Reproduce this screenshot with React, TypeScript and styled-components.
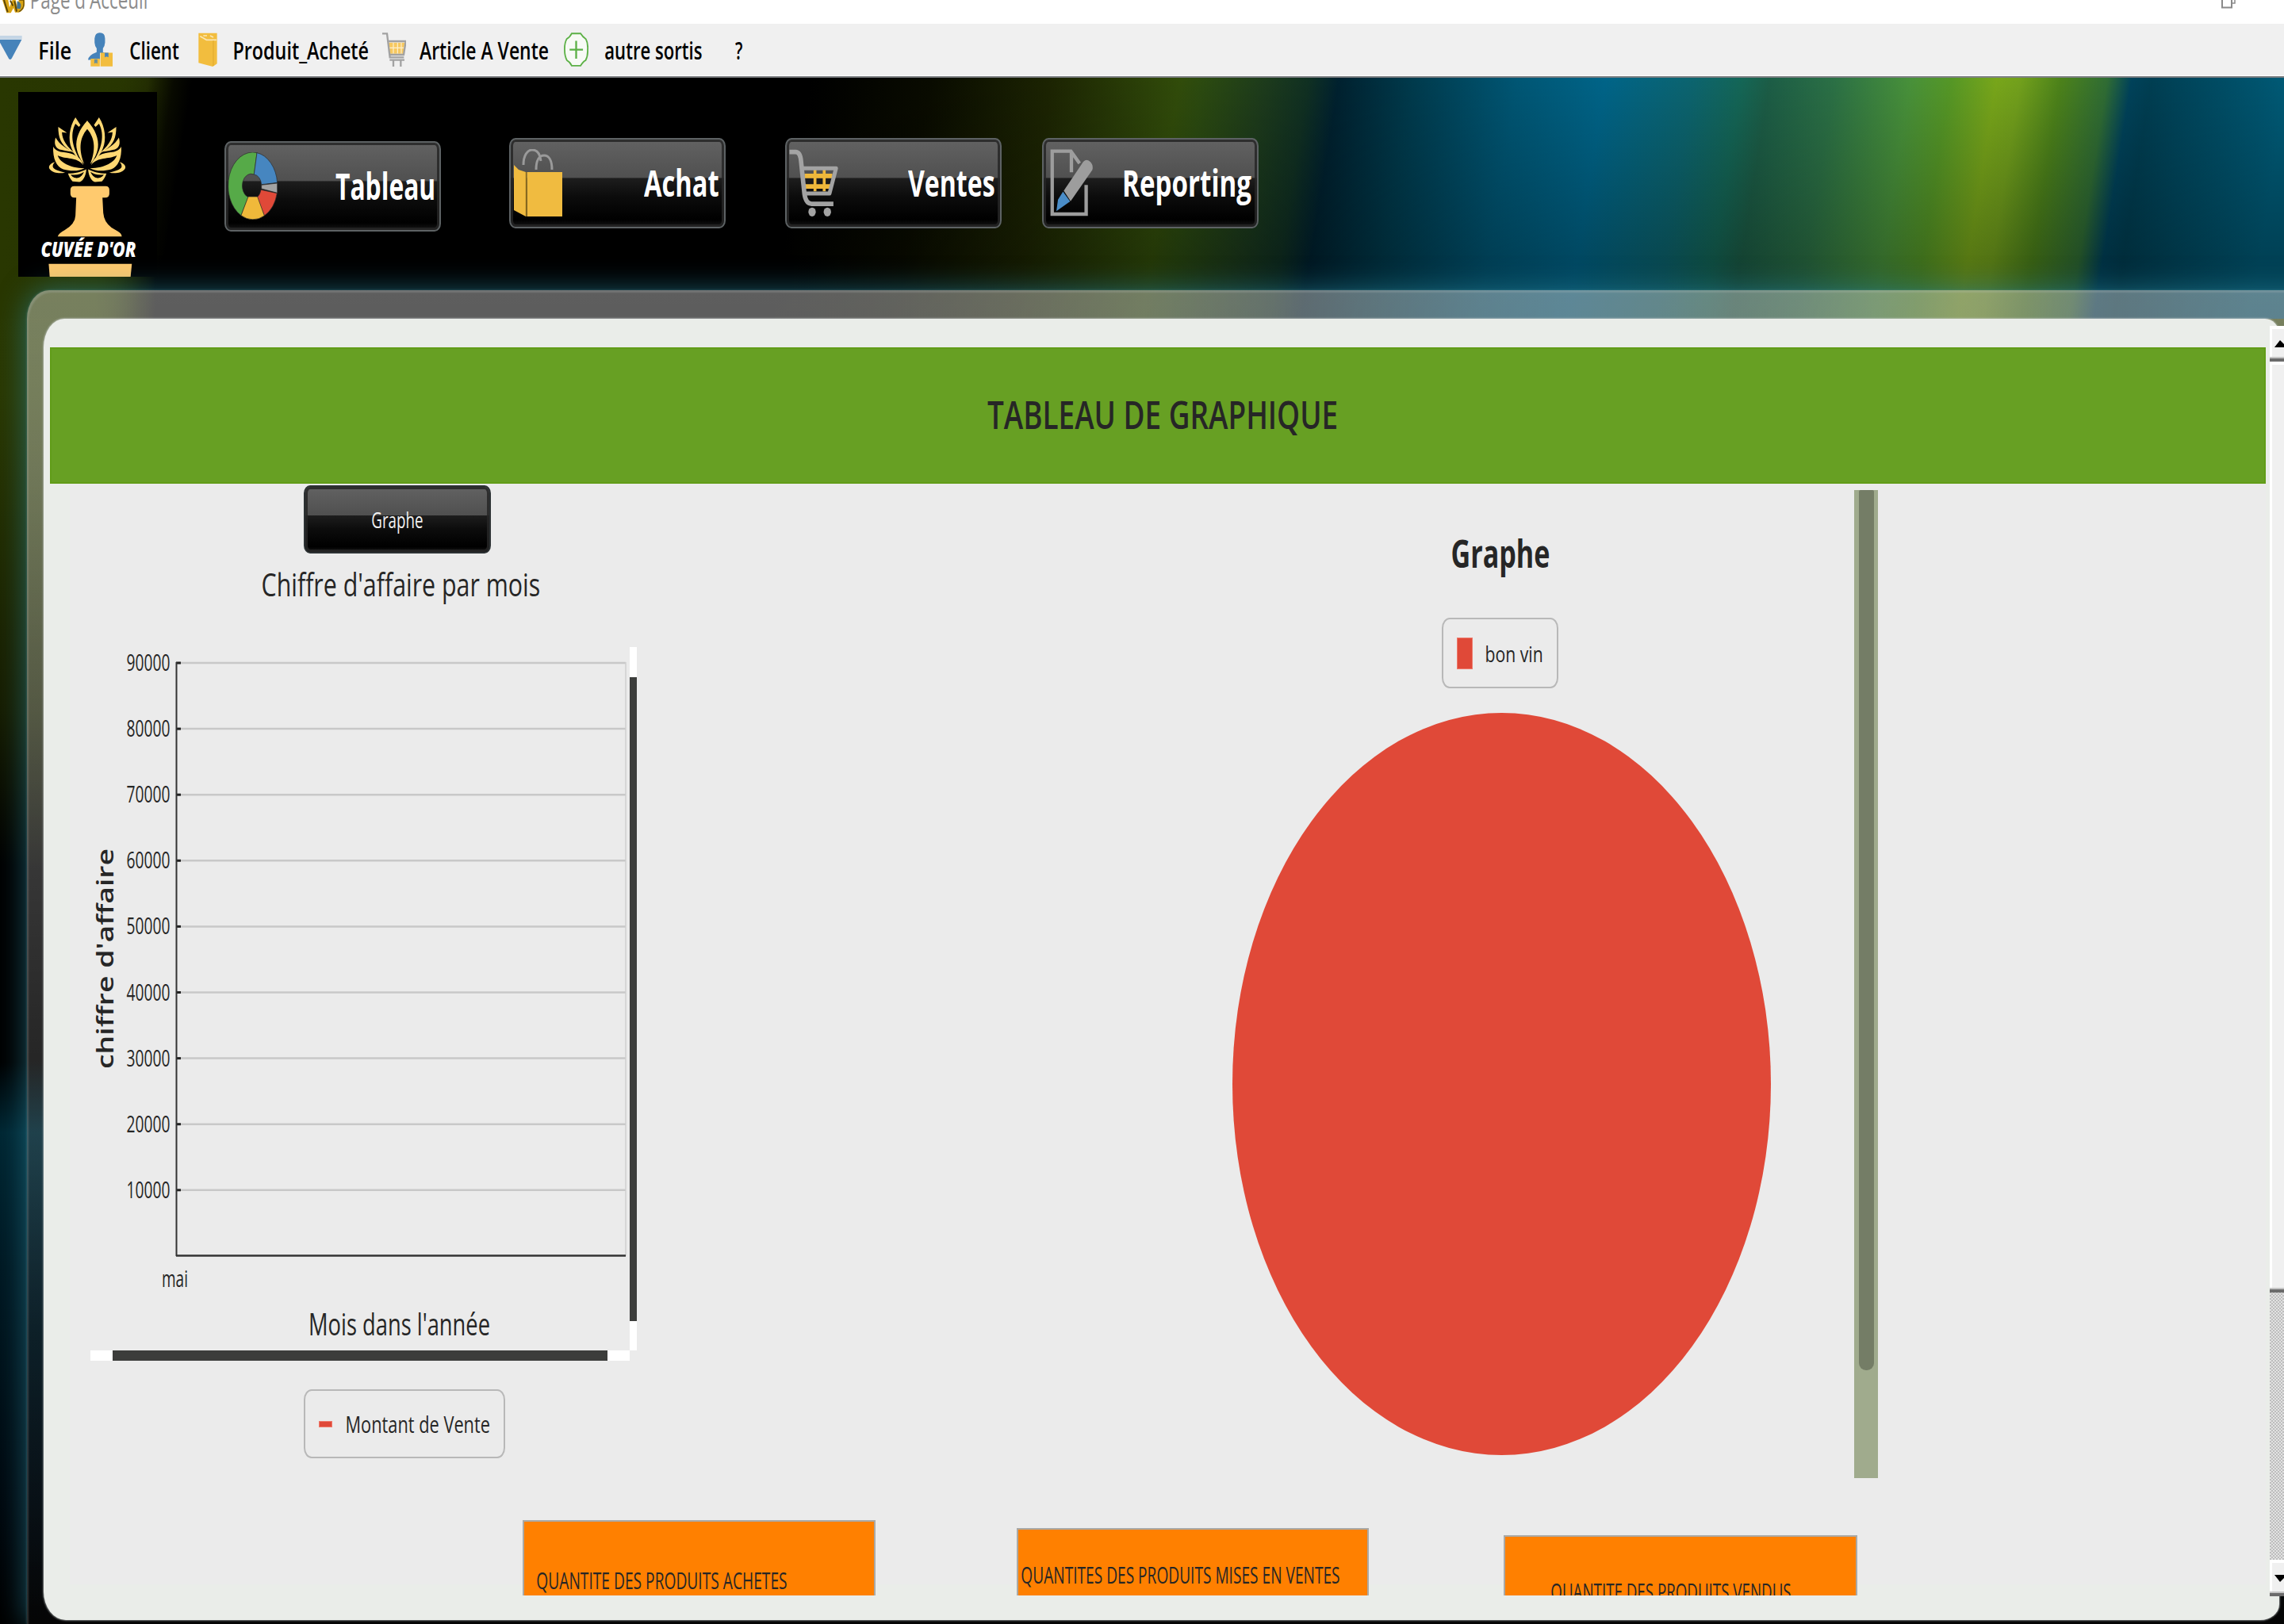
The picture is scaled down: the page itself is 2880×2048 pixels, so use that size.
import React, { useLayoutEffect, useRef, useState } from "react";
import styled, { createGlobalStyle } from "styled-components";

const FONT = '"Open Sans", "Noto Sans", sans-serif';

const GlobalStyle = createGlobalStyle`
  *, *::before, *::after { box-sizing: border-box; }
  html, body { margin: 0; padding: 0; background: #000; }
  body { font-family: ${FONT}; overflow: hidden; }
  svg { display: block; flex: none; }
`;

/* ---------- condensed text ---------- */

const LabelBox = styled.span<{ $w: number; $size: number }>`
  display: block;
  flex: none;
  width: ${(p) => p.$w}px;
  height: ${(p) => p.$size}px;
  line-height: ${(p) => p.$size}px;
  font-size: ${(p) => p.$size}px;
`;

const LabelInk = styled.span<{ $weight: number; $color: string }>`
  display: inline-block;
  white-space: nowrap;
  transform-origin: 0 50%;
  font-weight: ${(p) => p.$weight};
  color: ${(p) => p.$color};
`;

type LabelProps = {
  children: string;
  width: number;
  size: number;
  weight?: number;
  color?: string;
};

/** Text condensed horizontally so that its ink spans exactly `width` pixels. */
function Label({ children, width, size, weight = 400, color = "#262626" }: LabelProps) {
  const ref = useRef<HTMLSpanElement>(null);
  const [transform, setTransform] = useState("none");
  useLayoutEffect(() => {
    const ctx = document.createElement("canvas").getContext("2d");
    if (!ctx) return;
    ctx.font = `${weight} ${size}px ${FONT}`;
    const m = ctx.measureText(children);
    const ink = m.actualBoundingBoxLeft + m.actualBoundingBoxRight;
    const k = width / ink;
    setTransform(`translateX(${m.actualBoundingBoxLeft * k}px) scaleX(${k})`);
  }, [children, width, size, weight]);
  return (
    <LabelBox $w={width} $size={size}>
      <LabelInk ref={ref} $weight={weight} $color={color} style={{ transform }}>
        {children}
      </LabelInk>
    </LabelBox>
  );
}

/* ---------- window chrome ---------- */

const Window = styled.div`
  width: 2880px;
  height: 2048px;
  overflow: hidden;
  display: flex;
  flex-direction: column;
`;

const TitleBar = styled.div`
  flex: none;
  height: 30px;
  background: #fff;
  overflow: hidden;
  display: flex;
  align-items: flex-start;
  justify-content: space-between;
  padding: 0 61px 0 3px;
`;

const TitleGroup = styled.div`
  display: flex;
  gap: 9px;
  align-items: flex-start;
`;

const TitleText = styled.div`
  margin-top: -16px;
`;

const MenuBar = styled.div`
  flex: none;
  height: 68px;
  padding-bottom: 3px;
  background: linear-gradient(#f0f0f0 0 65px, #fff 65px 66px, #7e8184 66px);
  display: flex;
  align-items: center;
`;

const MenuItem = styled.div<{ $lead: number; $gap: number }>`
  display: flex;
  align-items: center;
  flex: none;
  margin: -1px 0 0 ${(p) => p.$lead}px;
  gap: ${(p) => p.$gap}px;
`;

const MenuText = styled.div`
  padding-top: 3px;
`;

const Desktop = styled.div`
  flex: 1;
  display: flex;
  flex-direction: column;
  background-image: linear-gradient(90deg, #293701 0px, #283601 120px, rgba(36, 48, 1, 0) 195px),
    linear-gradient(rgba(0, 0, 0, 0) 0%, rgba(0, 0, 0, 0.34) 92%),
    linear-gradient(
      99deg,
      #2a3a02 0px,
      #283601 150px,
      #222c02 185px,
      #080a00 217px,
      #000 240px,
      #000 1010px,
      #090b00 1160px,
      #1c2402 1310px,
      #314c0a 1470px,
      #2b4a10 1500px,
      #1c3a1c 1580px,
      #103022 1630px,
      #00212f 1668px,
      #003a4c 1760px,
      #005674 1890px,
      #006488 2000px,
      #0c646e 2110px,
      #146656 2170px,
      #1c5d46 2205px,
      #2b7045 2285px,
      #48913a 2380px,
      #559726 2430px,
      #78a61a 2487px,
      #72a01c 2517px,
      #4c821a 2567px,
      #2f6c34 2625px,
      #00425a 2655px,
      #003e52 2680px,
      #005a76 2850px
    ),
    linear-gradient(
      #283601 0px,
      #2a3802 400px,
      #161c00 800px,
      #000 1000px,
      #000 1240px,
      #002632 1330px,
      #001822 1500px,
      #00080e 1800px,
      #000 1950px
    );
  background-size: 100% 304px, 100% 304px, 100% 304px, 100% 100%;
  background-repeat: no-repeat;
`;

const ToolRow = styled.div`
  flex: none;
  height: 268px;
  display: flex;
  align-items: flex-start;
  padding: 18px 0 0 23px;
`;

const GlossButton = styled.div<{ $w: number; $h: number; $left: number; $top: number; $rim: string }>`
  flex: none;
  width: ${(p) => p.$w}px;
  height: ${(p) => p.$h}px;
  margin: ${(p) => p.$top}px 0 0 ${(p) => p.$left}px;
  border: 2px solid ${(p) => p.$rim};
  border-radius: 8px / 10px;
  background: linear-gradient(
    #626262 0%,
    #505050 43.5%,
    #1d1d1d 44.5%,
    #0c0c0c 65%,
    #000 92%,
    #161616 100%
  );
  box-shadow: inset 0 0 0 3px rgba(38, 38, 38, 0.85);
`;

const ToolFace = styled.div`
  height: 100%;
  display: flex;
  align-items: flex-start;
  justify-content: space-between;
  padding: 12px 7px 0 3px;
`;

const ToolCaption = styled.div`
  margin-top: 19px;
`;

const CenterFace = styled.div`
  height: 100%;
  display: flex;
  align-items: center;
  justify-content: center;
`;

/* ---------- panel ---------- */

const Frame = styled.div`
  flex: 1;
  margin: 0 -60px 0 34px;
  padding: 36px 0 0 21px;
  border-radius: 28px 0 0 0 / 36px 0 0 0;
  background: linear-gradient(
    rgba(255, 255, 255, 0.37) 0%,
    rgba(255, 255, 255, 0.34) 14%,
    rgba(255, 255, 255, 0.22) 42%,
    rgba(255, 255, 255, 0.13) 62%,
    rgba(255, 255, 255, 0.05) 78%,
    rgba(255, 255, 255, 0.02) 100%
  );
  box-shadow: 0 0 36px rgba(42, 140, 165, 0.6), 0 0 3px rgba(120, 165, 170, 0.5),
    inset 2px 3px 2px rgba(190, 200, 200, 0.22);
`;

const Panel = styled.div`
  width: 2819px;
  height: 1641px;
  display: flex;
  align-items: flex-start;
  background: #eaede9;
  border-radius: 26px 18px 24px 28px / 36px 20px 20px 36px;
  box-shadow: 0 0 2px 1px rgba(200, 205, 205, 0.55);
`;

const Content = styled.div`
  flex: none;
  width: 2794px;
  height: 1574px;
  margin: 36px 0 0 8px;
  overflow: hidden;
  display: flex;
  flex-direction: column;
  background: linear-gradient(#ebebeb, #ebebeb) 25px 0 / 100% 1560px no-repeat;
`;

const Banner = styled.div`
  flex: none;
  height: 172px;
  background: #67a023;
  box-shadow: inset 0 0 0 2px #619c18;
  display: flex;
  align-items: center;
  justify-content: center;
  padding: 0 0 2px 10px;
`;

const Body = styled.div`
  flex: none;
  height: 1307px;
  display: flex;
  align-items: flex-start;
`;

const SalesColumn = styled.div`
  width: 740px;
  display: flex;
  flex-direction: column;
`;

const SalesTitle = styled.div`
  margin: 18px 0 0 268px;
`;

const ChartViewport = styled.div`
  margin: 59px 0 0 51px;
  display: grid;
  grid-template-columns: 680px 9px;
  grid-template-rows: 887px 13px;
`;

const VBar = styled.div`
  background: linear-gradient(#fff 0 38px, #3c3d3b 38px 850px, #fff 850px);
`;

const HBar = styled.div`
  background: linear-gradient(90deg, #fff 0 28px, #3c3d3b 28px 652px, #fff 652px);
`;

const Legend = styled.div<{ $w: number; $h: number; $top: number; $left: number; $gap: number }>`
  flex: none;
  width: ${(p) => p.$w}px;
  height: ${(p) => p.$h}px;
  margin: ${(p) => p.$top}px 0 0 ${(p) => p.$left}px;
  padding-left: 17px;
  display: flex;
  align-items: center;
  gap: ${(p) => p.$gap}px;
  border: 2px solid #b8b8b8;
  border-radius: 10px / 13px;
`;

const Swatch = styled.div<{ $w: number; $h: number }>`
  width: ${(p) => p.$w}px;
  height: ${(p) => p.$h}px;
  background: #e04938;
  border: 1px solid #ee7a6c;
`;

const PieColumn = styled.div`
  width: 679px;
  margin: 63px 0 0 751px;
  display: flex;
  flex-direction: column;
  align-items: center;
`;

const PieHeading = styled.div`
  margin-right: 4px;
  display: flex;
  flex-direction: column;
  align-items: center;
`;

const PieBox = styled.div`
  margin-top: 31px;
`;

const PieScroll = styled.div`
  width: 30px;
  height: 1246px;
  margin: 8px 0 0 105px;
  padding: 0 5px 0 6px;
  background: #a0ab8d;
`;

const PieThumb = styled.div`
  height: 1110px;
  background: #747d66;
  border-radius: 2px 2px 9px 9px;
`;

const Cards = styled.div`
  flex: 1;
  display: flex;
  align-items: flex-start;
  padding-left: 596px;
`;

const Card = styled.div<{ $w: number; $lead: number; $top: number; $px: number; $py: number }>`
  flex: none;
  width: ${(p) => p.$w}px;
  height: 180px;
  margin: ${(p) => p.$top}px 0 0 ${(p) => p.$lead}px;
  padding: ${(p) => p.$py}px 0 0 ${(p) => p.$px}px;
  background: #ff8000;
  border: 2px solid #aaa9a6;
`;

/* ---------- classic scroll bar ---------- */

const ScrollBar = styled.div`
  flex: none;
  width: 18px;
  height: 1602px;
  margin: 9px 0 0 5px;
  display: flex;
  flex-direction: column;
  overflow: hidden;
  background: repeating-conic-gradient(#bdbdbd 0 25%, #e2e2e2 0 50%) 0 0 / 4px 4px;
`;

const Raised = styled.div<{ $h: number }>`
  flex: none;
  height: ${(p) => p.$h}px;
  padding-left: 6px;
  display: flex;
  align-items: center;
  background: linear-gradient(90deg, #fff 0 3px, #f0f0f0 3px);
  border-top: 4px solid #fff;
  border-bottom: 4px solid #6b6b6b;
  box-shadow: inset 0 -2px 0 #c4c4c4;
`;

const Track = styled.div`
  flex: 1;
`;

/* ---------- icons ---------- */

const AppIcon = () => (
  <svg width="28" height="17" viewBox="0 0 84 51">
    <path d="M0 0H22L27 28L38 0H50L56 26L62 0H84Q88 40 62 47H48L42 30L32 49H16Z" fill="#d9a414" />
    <path d="M6 0L20 46M46 4L54 44M30 2L40 22" stroke="#5b4508" strokeWidth="6" fill="none" />
    <path d="M56 4Q76 10 68 34L54 32Z" fill="#47748e" />
    <path d="M64 0H80Q86 34 62 44" stroke="#6b500a" strokeWidth="4" fill="none" />
  </svg>
);

const RestoreIcon = () => (
  <svg width="18" height="11" viewBox="0 0 18 11">
    <path d="M1 0V9.5H13V0" fill="none" stroke="#8a8a8a" strokeWidth="2" />
    <path d="M17 0V4H14" fill="none" stroke="#8a8a8a" strokeWidth="1.5" />
  </svg>
);

const DownIcon = () => (
  <svg width="28" height="43" viewBox="0 0 84 129">
    <path d="M0 12H83V26H0Z" fill="#c4d5e5" />
    <path d="M-6 27H82L44 98Q38 106 33 98Z" fill="#4683ba" />
  </svg>
);

const ClientIcon = () => (
  <svg width="31" height="43" viewBox="333 120 94 129">
    <path
      d="M378 120Q398 120 398 142V158Q397 172 390 180V194Q412 200 422 214V224H333Q334 206 366 194V180Q359 172 358 158V142Q360 120 378 120Z"
      fill="#4683ba"
    />
    <path d="M381 197H427V249H381Z M343 219H378V249H343Z" fill="#f2bd3e" />
    <path d="M397 197H411V214L404 211L397 214Z" fill="#4683ba" />
    <path d="M357 222H369V238L363 235L357 238Z" fill="#6a8f9a" />
    <path d="M380 197V249" stroke="#f4e2b8" strokeWidth="3" />
  </svg>
);

const ProductIcon = () => (
  <svg width="24" height="43" viewBox="751 120 72 129">
    <path d="M752 122H822V238L806 249L752 235Z" fill="#f2bd3e" />
    <path d="M758 134L782 148H820M770 132H784M796 132L808 138" stroke="#fbe7b4" strokeWidth="5" fill="none" />
    <path d="M808 150V246" stroke="#dfa92c" strokeWidth="3" />
  </svg>
);

const SmallCartIcon = () => (
  <svg width="30" height="43" viewBox="66 120 90 129">
    <path d="M90 158H151L146 200H94Z" fill="#f6c860" />
    <path d="M92 178H150M108 158V200M124 158V200M138 158V200" stroke="#fdf0cf" strokeWidth="3.5" />
    <path
      d="M66 124H84L95 214H148M87 153H155L147 204H93"
      fill="none"
      stroke="#a2a2a2"
      strokeWidth="7"
    />
    <path d="M94 224H150M108 224V249M136 224V249" fill="none" stroke="#a2a2a2" strokeWidth="7" />
  </svg>
);

const PlusIcon = () => (
  <svg width="31" height="43" viewBox="752 120 94 129">
    <path
      d="M782 123H816Q824 136 836 144Q845 160 843 186Q844 210 835 226Q826 230 816 246H782Q776 232 764 226Q755 210 755 186Q754 160 763 144Q775 138 782 123Z"
      fill="#f7faf5"
      stroke="#5bb045"
      strokeWidth="5.5"
    />
    <path d="M774 185H825M799 151V219" stroke="#5bb045" strokeWidth="7" />
  </svg>
);

const DonutIcon = () => (
  <svg width="62" height="85" viewBox="867 278 186 255">
    <g stroke="#2b2b2b" strokeWidth="2">
      <path d="M975 280A93 127 0 0 0 915 517L942 448A31 42 0 0 1 964 362Z" fill="#56aa48" />
      <path d="M975 280A93 127 0 0 1 1052 393L992 400A31 42 0 0 0 964 362Z" fill="#4686c0" />
      <path d="M1052 395V432L992 416V402Z" fill="#a3a3a3" />
      <path d="M1051 433A93 127 0 0 1 1003 518L976 448A31 42 0 0 0 990 420Z" fill="#e04938" />
      <path d="M1003 518A93 127 0 0 1 915 517L942 446H977Z" fill="#f0b93a" />
    </g>
  </svg>
);

const BagIcon = () => (
  <svg width="62" height="85" viewBox="0 0 62 85">
    <path d="M13 20C13 8 18 1 24 1S34 6 35 15M29 26C29 14 33 8 39 8S49 14 49 26" fill="none" stroke="#9a9a9a" strokeWidth="3" />
    <path d="M1 20L7 26L16 29V85L1 77Z" fill="#f0bb40" />
    <path d="M17.5 29H62V85H17.5Z" fill="#f0bb40" />
    <path d="M16.5 29V85" stroke="#8a6a1e" strokeWidth="1.4" />
  </svg>
);

const CartIcon = () => (
  <svg width="62" height="85" viewBox="50 114 186 256">
    <path d="M108 216H214M110 256H208" stroke="#efb83b" strokeWidth="17" />
    <path d="M148 192V274M183 192V274" stroke="#efb83b" strokeWidth="11" />
    <path d="M102 187H228L203 283H112" fill="none" stroke="#a3a3a3" strokeWidth="15" strokeLinejoin="round" />
    <path
      d="M51 125H74Q92 125 95 160L108 285Q114 322 135 322H218"
      fill="none"
      stroke="#a3a3a3"
      strokeWidth="17"
    />
    <ellipse cx="137" cy="353" rx="14" ry="17" fill="#a3a3a3" />
    <ellipse cx="195" cy="353" rx="14" ry="17" fill="#a3a3a3" />
  </svg>
);

const ReportIcon = () => (
  <svg width="62" height="85" viewBox="1023 114 186 256">
    <path
      d="M1175 250V361H1046V122H1117L1150 168M1119 126V202"
      fill="none"
      stroke="#9d9d9d"
      strokeWidth="13"
    />
    <path d="M1090 272L1164 162Q1178 148 1192 164Q1204 178 1198 194L1116 312Z" fill="#9d9d9d" />
    <path d="M1087 276L1114 313L1062 350L1068 306Z" fill="#4a8dc8" />
  </svg>
);

const HalfLotus = () => (
  <g>
    <path d="M331 156C300 190 286 225 290 258C294 285 306 307 319 320C300 270 298 225 331 187Z" />
    <path d="M286 144C262 180 258 230 271 260C280 282 293 300 306 310C277 262 263 212 286 168L299 180L305 173Z" />
    <path d="M221 180C221 220 231 246 262 267L288 284C254 254 236 230 235 200L254 202Z" />
    <path d="M211 220C204 245 210 262 234 267C252 272 268 272 284 276C250 262 226 246 211 220Z" />
    <path d="M202 254C200 300 214 330 240 340C270 348 300 347 320 336C262 336 226 312 219 288C250 304 290 292 316 324C304 288 270 279 242 276C225 275 208 268 202 254Z" />
    <path d="M209 312C189 318 181 330 190 341C200 354 225 357 247 353C225 347 206 342 201 332C199 325 202 318 209 312Z" />
    <path d="M258 356C285 356 306 350 327 340C326 366 313 386 301 388L275 386C266 376 261 366 258 356Z" />
    <path d="M268 360C290 364 306 358 318 350C312 366 300 374 288 374C278 372 272 366 268 360Z" fill="#000" />
    <path d="M276 372C296 382 314 370 322 350" fill="none" stroke="#ffd873" strokeWidth="4" />
  </g>
);

const Logo = () => (
  <svg width="175" height="233" viewBox="70 48 524 698" preserveAspectRatio="none">
    <rect x="70" y="48" width="524" height="698" fill="#000" />
    <g fill="#ffd873">
      <HalfLotus />
      <g transform="matrix(-1 0 0 1 661 0)">
        <HalfLotus />
      </g>
    </g>
    <g fill="#ffca6e">
      <path d="M281 404H400Q414 404 414 418V432Q414 447 398 447H388L391 505Q394 540 422 560L445 574Q460 582 461 594H219Q222 582 245 570Q285 546 286 515L289 447H283Q267 447 267 432V418Q267 404 281 404Z" />
      <path d="M185 697H499L494 748H189Z" />
    </g>
    <text
      x="155"
      y="671"
      fontFamily={FONT}
      fontSize="78"
      fontStyle="italic"
      fontWeight="800"
      fill="#fff"
      textLength="360"
      lengthAdjust="spacingAndGlyphs"
    >
      CUVÉE D'OR
    </text>
  </svg>
);

const Arrow = ({ up = false }: { up?: boolean }) => (
  <svg width="16" height="9" viewBox="0 0 16 9">
    <path d={up ? "M0 9L7 0L16 9Z" : "M0 0H16L7 9Z"} fill="#000" />
  </svg>
);

/* ---------- sales chart ---------- */

const TICKS = [90000, 80000, 70000, 60000, 50000, 40000, 30000, 20000, 10000];

function SalesChart() {
  return (
    <svg width="680" height="887" viewBox="114 815 680 887" fontFamily={FONT} fill="#262626">
      {TICKS.map((t, i) => {
        const y = 835 + i * 83.1;
        return (
          <g key={t}>
            <path d={`M224 ${y}H789`} stroke="#c8c8c8" strokeWidth="2.5" />
            <path d={`M222 ${y}H228`} stroke="#222" strokeWidth="3" />
            <text x="159.5" y={y + 10} fontSize="29" textLength="55" lengthAdjust="spacingAndGlyphs">
              {t}
            </text>
          </g>
        );
      })}
      <path d="M789 834V1583" stroke="#cfcfcf" strokeWidth="1.5" />
      <path d="M222.5 834V1583" stroke="#333" strokeWidth="2" />
      <path d="M222 1582.5H789" stroke="#333" strokeWidth="2.5" />
      <text x="204" y="1622" fontSize="29" textLength="33" lengthAdjust="spacingAndGlyphs">
        mai
      </text>
      <text x="389" y="1683" fontSize="38" textLength="229" lengthAdjust="spacingAndGlyphs">
        Mois dans l'année
      </text>
      <text
        transform="translate(143 1347) rotate(-90)"
        fontSize="28"
        fontWeight="600"
        textLength="278"
        lengthAdjust="spacingAndGlyphs"
      >
        chiffre d'affaire
      </text>
    </svg>
  );
}

/* ---------- page ---------- */

const MENU = [
  { text: "File", w: 39, lead: 0, gap: 22, icon: <DownIcon /> },
  { text: "Client", w: 62, lead: 22, gap: 22, icon: <ClientIcon /> },
  { text: "Produit_Acheté", w: 169, lead: 24, gap: 21, icon: <ProductIcon /> },
  { text: "Article A Vente", w: 162, lead: 18, gap: 17, icon: <SmallCartIcon /> },
  { text: "autre sortis", w: 122, lead: 20, gap: 21, icon: <PlusIcon /> },
  { text: "?", w: 9, lead: 42, gap: 0, icon: null },
];

const TOOLS = [
  { text: "Tableau", w: 124, left: 85, top: 62, icon: <DonutIcon /> },
  { text: "Achat", w: 94, left: 86, top: 58, icon: <BagIcon /> },
  { text: "Ventes", w: 109, left: 75, top: 58, icon: <CartIcon /> },
  { text: "Reporting", w: 160, left: 51, top: 58, icon: <ReportIcon /> },
];

const CARDS = [
  { text: "QUANTITE DES PRODUITS ACHETES", tw: 315, w: 445, lead: 0, top: 0, px: 16, py: 59 },
  { text: "QUANTITES DES PRODUITS MISES EN VENTES", tw: 401, w: 444, lead: 178, top: 10, px: 4, py: 42 },
  { text: "QUANTITE DES PRODUITS VENDUS", tw: 302, w: 446, lead: 170, top: 19, px: 58, py: 54 },
];

export default function App() {
  return (
    <Window>
      <GlobalStyle />
      <TitleBar>
        <TitleGroup>
          <AppIcon />
          <TitleText>
            <Label width={145} size={31} color="#8c8c8c">
              Page d'Acceuil
            </Label>
          </TitleText>
        </TitleGroup>
        <RestoreIcon />
      </TitleBar>
      <MenuBar>
        {MENU.map((m) => (
          <MenuItem key={m.text} $lead={m.lead} $gap={m.gap}>
            {m.icon}
            <MenuText>
              <Label width={m.w} size={30} weight={600} color="#000">
                {m.text}
              </Label>
            </MenuText>
          </MenuItem>
        ))}
      </MenuBar>
      <Desktop>
        <ToolRow>
          <Logo />
          {TOOLS.map((t) => (
            <GlossButton key={t.text} $w={273} $h={114} $left={t.left} $top={t.top} $rim="#5d6264">
              <ToolFace>
                {t.icon}
                <ToolCaption>
                  <Label width={t.w} size={46} weight={700} color="#fff">
                    {t.text}
                  </Label>
                </ToolCaption>
              </ToolFace>
            </GlossButton>
          ))}
        </ToolRow>
        <Frame>
          <Panel>
            <Content>
              <Banner>
                <Label width={440} size={48} weight={600}>
                  TABLEAU DE GRAPHIQUE
                </Label>
              </Banner>
              <Body>
                <SalesColumn>
                  <GlossButton $w={236} $h={86} $left={320} $top={2} $rim="#2c3133">
                    <CenterFace>
                      <Label width={64} size={28} color="#f2f2f2">
                        Graphe
                      </Label>
                    </CenterFace>
                  </GlossButton>
                  <SalesTitle>
                    <Label width={349} size={41}>
                      Chiffre d'affaire par mois
                    </Label>
                  </SalesTitle>
                  <ChartViewport>
                    <SalesChart />
                    <VBar />
                    <HBar />
                  </ChartViewport>
                  <Legend $w={254} $h={87} $top={36} $left={320} $gap={18}>
                    <Swatch $w={17} $h={8} />
                    <Label width={180} size={29}>
                      Montant de Vente
                    </Label>
                  </Legend>
                </SalesColumn>
                <PieColumn>
                  <PieHeading>
                    <Label width={122} size={49} weight={700}>
                      Graphe
                    </Label>
                    <Legend $w={147} $h={89} $top={57} $left={0} $gap={17}>
                      <Swatch $w={20} $h={40} />
                      <Label width={70} size={28}>
                        bon vin
                      </Label>
                    </Legend>
                  </PieHeading>
                  <PieBox>
                    <svg width="679" height="936" viewBox="0 0 679 936">
                      <ellipse cx="339.5" cy="468" rx="339.5" ry="468" fill="#e04938" />
                    </svg>
                  </PieBox>
                </PieColumn>
                <PieScroll>
                  <PieThumb />
                </PieScroll>
              </Body>
              <Cards>
                {CARDS.map((c) => (
                  <Card key={c.text} $w={c.w} $lead={c.lead} $top={c.top} $px={c.px} $py={c.py}>
                    <Label width={c.tw} size={29}>
                      {c.text}
                    </Label>
                  </Card>
                ))}
              </Cards>
            </Content>
            <ScrollBar>
              <Raised $h={45}>
                <Arrow up />
              </Raised>
              <Raised $h={1174} />
              <Track />
              <Raised $h={46}>
                <Arrow />
              </Raised>
            </ScrollBar>
          </Panel>
        </Frame>
      </Desktop>
    </Window>
  );
}
